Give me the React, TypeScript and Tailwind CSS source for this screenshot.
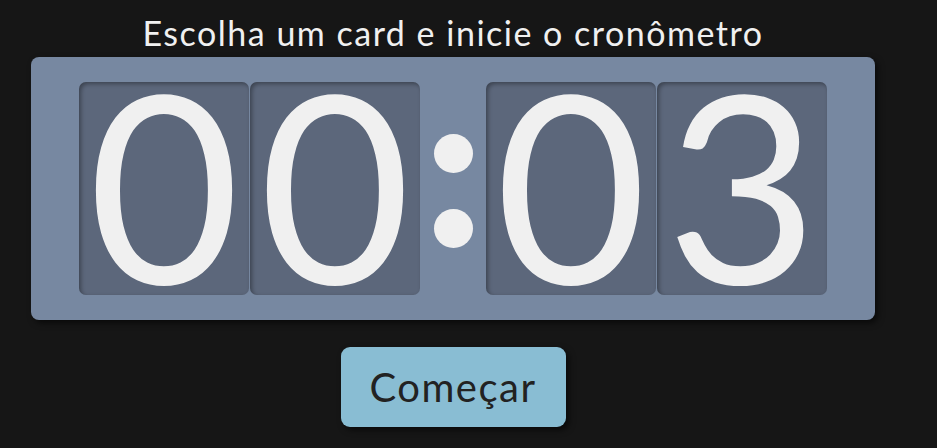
export default function App() {
  const digits = ["0", "0", "0", "3"];

  const Card = ({ d }: { d: string }) => (
    <div className="w-[170px] h-[213px] rounded-[7px] bg-[#5c677b] shadow-[inset_2px_2px_4px_rgba(0,0,0,0.35)] flex items-center justify-center overflow-hidden">
      <span className="block text-[262px] leading-[200px] text-[#f0f0f0] font-normal mt-[-12px]">{d}</span>
    </div>
  );

  return (
    <div
      className="w-[937px] h-[448px] bg-[#161616] overflow-hidden"
      style={{ fontFamily: "Lato, 'Noto Sans', sans-serif" }}
    >
      <div className="w-[906px] flex flex-col items-center pt-[12px]">
        <h1 className="text-[34px] leading-[42px] tracking-[1.5px] text-[#f0f0f0] font-normal">
          Escolha um card e inicie o cronômetro
        </h1>
        <div className="mt-[3px] w-[844px] h-[263px] rounded-[8px] bg-[#7788a1] shadow-[3px_3px_6px_rgba(0,0,0,0.6)] flex items-center px-[48px]">
          <div className="flex gap-[1px]">
            <Card d={digits[0]} />
            <Card d={digits[1]} />
          </div>
          {/* colon drawn as two dots */}
          <div className="w-[66px] flex flex-col items-center gap-[36px] pt-[4px]">
            <span className="w-[39px] h-[39px] rounded-full bg-[#f0f0f0]" />
            <span className="w-[39px] h-[39px] rounded-full bg-[#f0f0f0]" />
          </div>
          <div className="flex gap-[1px]">
            <Card d={digits[2]} />
            <Card d={digits[3]} />
          </div>
        </div>
        <button className="mt-[27px] w-[225px] h-[80px] rounded-[9px] bg-[#89bdd3] shadow-[3px_3px_6px_rgba(0,0,0,0.6)] text-[40px] tracking-[1.5px] text-[#222] font-normal">
          Começar
        </button>
      </div>
    </div>
  );
}
